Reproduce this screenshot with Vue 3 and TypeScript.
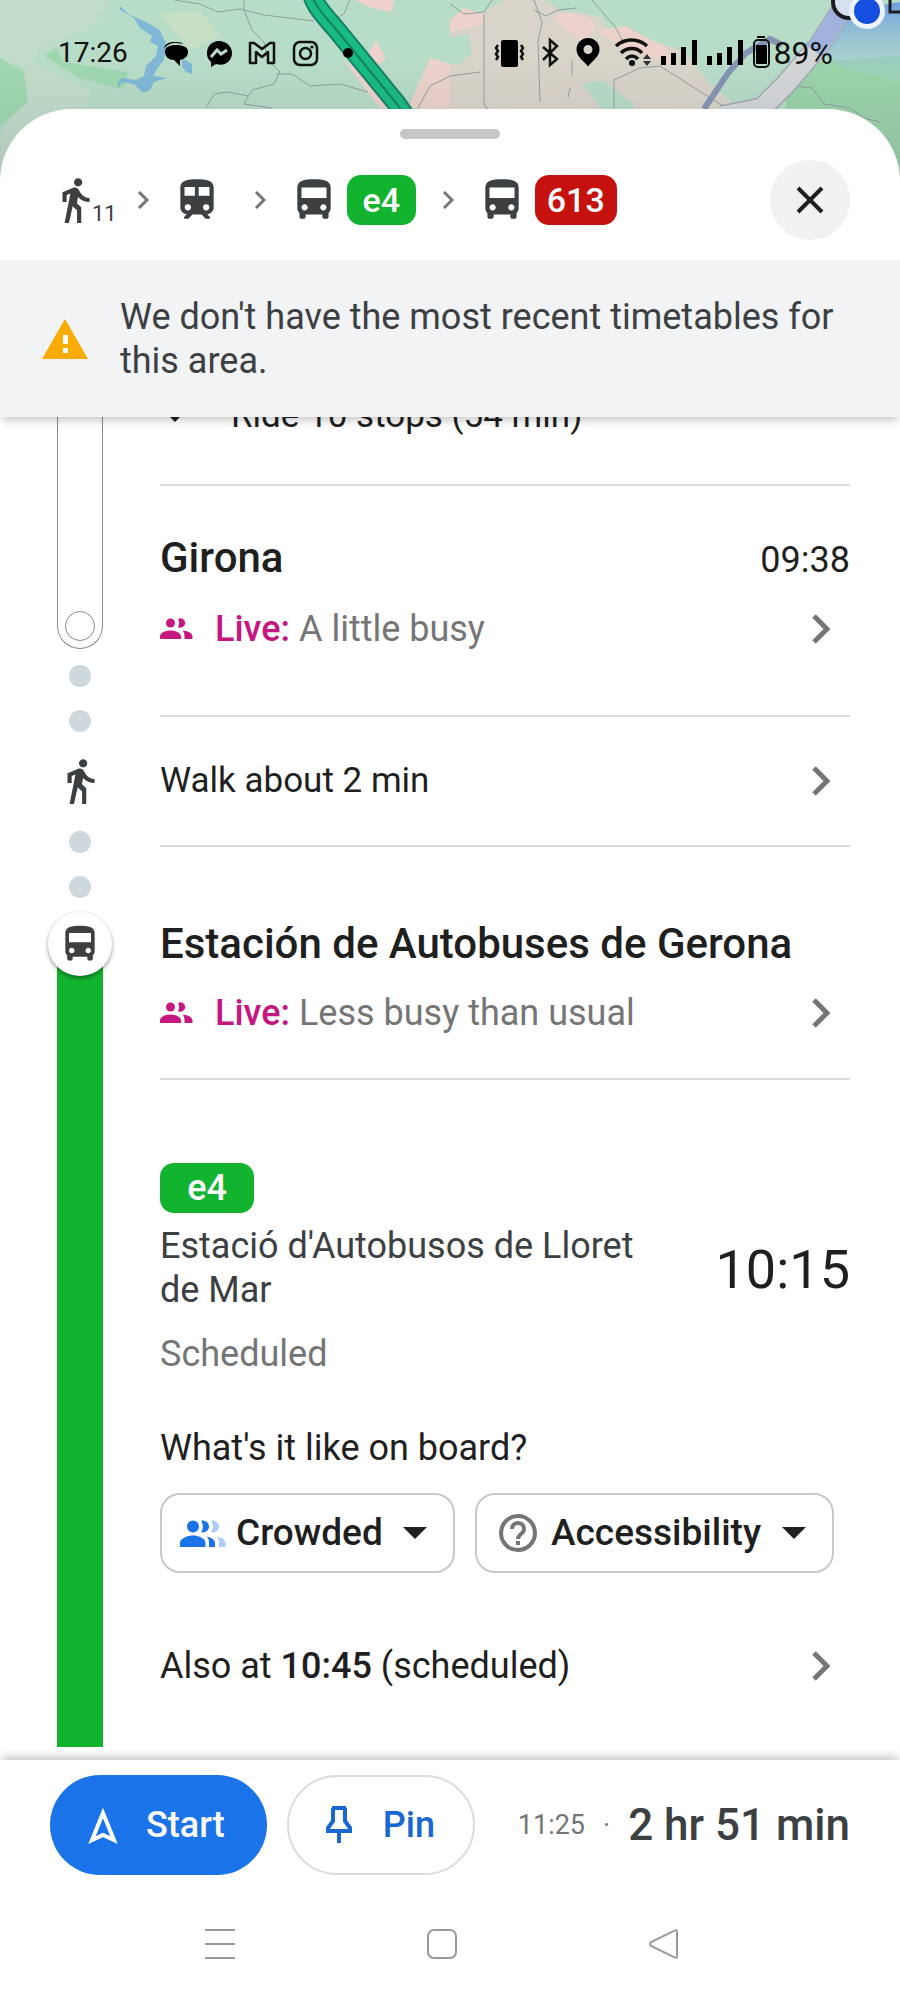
<script setup lang="ts">
interface Leg {
  mode: 'walk' | 'train' | 'bus'
  minutes?: number
  line?: string
  tone?: 'green' | 'red'
}

const legs: Leg[] = [
  { mode: 'walk', minutes: 11 },
  { mode: 'train' },
  { mode: 'bus', line: 'e4', tone: 'green' },
  { mode: 'bus', line: '613', tone: 'red' },
]

const walkPath =
  'M13.5 5.5c1.1 0 2-.9 2-2s-.9-2-2-2-2 .9-2 2 .9 2 2 2zM9.8 8.9L7 23h2.1l1.8-8 2.1 2v6h2v-7.5l-2.1-2 .6-3C14.8 12 16.8 13 19 13v-2c-1.9 0-3.5-1-4.3-2.4l-1-1.6c-.4-.6-1-1-1.7-1-.3 0-.5.1-.8.1L6 8.3V13h2V9.6l1.8-.7z'
const busPath =
  'M4 16c0 .88.39 1.67 1 2.22V20c0 .55.45 1 1 1h1c.55 0 1-.45 1-1v-1h8v1c0 .55.45 1 1 1h1c.55 0 1-.45 1-1v-1.78c.61-.55 1-1.34 1-2.22V6c0-3.500-3.580-4-8-4s-8 .5-8 4v10zm3.500 1c-.83 0-1.500-.67-1.500-1.500S6.670 14 7.500 14s1.500.67 1.500 1.500S8.330 17 7.500 17zm9 0c-.83 0-1.500-.67-1.500-1.500s.67-1.500 1.500-1.500 1.500.67 1.500 1.500-.67 1.500-1.500 1.500zm1.500-6H6V6h12v5z'
const trainPath =
  'M4 6c0-3.5 3.58-4 8-4s8 .5 8 4v9.5c0 1.9-1.4 3.2-3.1 3.3l1.3 1.4v.8h-2.1l-1.9-2H9.8l-1.9 2H5.8v-.8l1.3-1.4C5.4 18.7 4 17.4 4 15.5zM6 5.7v4.200h5V5.700zm6.800 0v4.200H18V5.700zM7.600 14a1.500 1.500 0 1 0 0 3 1.500 1.500 0 0 0 0-3zm8.800 0a1.500 1.500 0 1 0 0 3 1.500 1.500 0 0 0 0-3z'
const modePath = { walk: walkPath, train: trainPath, bus: busPath }
</script>

<template>
  <div class="screen">
    <svg class="map" viewBox="0 0 900 180" preserveAspectRatio="xMidYMin slice" aria-hidden="true">
      <defs>
        <linearGradient id="beam" x1="0" y1="0" x2="0" y2="1">
          <stop offset="0" stop-color="#6f9fe0" />
          <stop offset="1" stop-color="#a9d3cf" stop-opacity=".3" />
        </linearGradient>
        <linearGradient id="shade" x1="0" y1="0" x2="0" y2="1">
          <stop offset="0" stop-color="#556" stop-opacity="0" />
          <stop offset="1" stop-color="#556" stop-opacity=".16" />
        </linearGradient>
      </defs>
      <rect width="900" height="180" fill="#b7dcc7" />
      <path fill="#c2dccb" d="M0 0h110l-20 30-50 18-10 20-30-8zM30 60l60 30-10 40-30 50H0v-40z" />
      <path fill="#9fd8b0" d="M0 58l24 14 4 30-28 24zM44 56l12-8 8 14 64 10-4 18-44-12z" />
      <path fill="#c6dfc5" d="M160 14l40-4 20 26-30 14z" />
      <path fill="#d9d4c9" d="M450 22c8-8 24-10 34-10l20-12h40l16 10 28 4 14 4 12 26 36-4 36 12 22 30 30 26 22 20H414l16-44 20-10z" />
      <path fill="#ecd2cb" d="M354 0h40l-2 12-20-4zM376 40l10 18-8 8-10-12zM342 58l60 50h-22zM430 58l20 6v44h-42zM450 20l14-12 20 6v10l-34 8zM560 14c16-2 36 4 36 14l-14 14-30-24zM596 30l30-4 40 22 6 16-50-16z" />
      <path fill="#b7dcc7" d="M582 84l20-4 32 24v8h-30zM450 38l18-4 4 18-12 12h-10z" />
      <path fill="#9bd3a9" d="M786 96l30-34 84-6v124h-60l-14-62-40-10z" />
      <path fill="url(#beam)" d="M840 12l60-10v80l-60-16-28-20z" />
      <path fill="#7fb8d6" d="M120 6l8 8 18 8 14 8 6 14-2 16-8 10-2 6 12 2-12 4-4 8-4 2h-4l-8-8-12-2-4 6v-6l4-4 14 2 8-4 2-10 10-10 2-10-8-4 2-6-12-8-6-10-14-8zM182 58l10 6v10l-6-2-4-6z" />
      <g fill="none" stroke="#8f9f9d" stroke-width="1">
        <path d="M174 0l26 4 18 8 22-3 24 6 50 6M244 0v10l8 20 12 12 4 18 12 12-6 12-22 6-8 14 28 4M206 108l8-14 14-2 20 4M276 74l16 0 18 12 30-2 28 8M350 0l-6 14-8 4M418 108l12-22 20-10M450 4l14 10 20-2 8-12M484 14v90l4 6M534 0l8 22-4 20 2 60M534 10l12 6 12-6 18-2M592 0l24 28 6 12M450 76l30-4M614 108v-28l26-12 20-2 66 42M572 60v16M570 88l-2 10M784 98l12-12 16 2 12 16 26 4 14 10 16 4" />
      </g>
      <path fill="none" stroke="#8593b4" stroke-width="6" d="M704 109l24-36 18-20 24-14 12 6" />
      <path fill="none" stroke="#a1a7b3" stroke-width="22" d="M722 116l40-8 24-24 34-40 22-34" />
      <path fill="none" stroke="#d3d6d8" stroke-width="19" d="M722 116l40-8 24-24 34-40 22-34" />
      <path fill="none" stroke="#9fb2db" stroke-width="19" d="M814 51l10-14 24-36" />
      <path fill="none" stroke="#157f68" stroke-width="20" d="M311-10c2 14 12 24 24 38l62 76 14 20" />
      <path fill="none" stroke="#18bb82" stroke-width="16" d="M311-10c2 14 12 24 24 38l62 76 14 20" />
      <path fill="none" stroke="#12805d" stroke-width="2" d="M311-10c2 14 12 24 24 38l62 76 14 20" />
      <rect y="60" width="900" height="120" fill="url(#shade)" />
      <circle cx="849" cy="2" r="16" fill="#d6dfee" stroke="#1b1c20" stroke-width="4" />
      <path fill="none" stroke="#1b1c20" stroke-width="3" d="M890-2v14h12" />
      <circle cx="867" cy="11" r="18" fill="#eef3fb" />
      <circle cx="867" cy="11" r="13" fill="#164fe0" />
    </svg>

    <header class="status">
      <span class="clock">17:26</span>
      <svg class="s43" viewBox="-22 -16 43 32"><path d="M-12-4c1-5 4-7 10-7 4 0 7 0 9 2-9-2-15-1-19 5zM12-1c0 5-4 7-8 8v6l-6-6c-5 0-9-3-9-8s4-7 11-7 12 2 12 7z" /></svg>
      <svg class="s43" viewBox="-22 -16 43 32"><path d="M0-12C-7-12-12-7-12 0c0 4 1 6 4 9v5l5-3C6 14 13 8 13 0 13-7 7-12 0-12z" /><path d="M-8 4l6-7 4 4 6-4" fill="none" stroke="#b7dcc7" stroke-width="3" /></svg>
      <svg class="s43" viewBox="-22 -16 43 32"><path d="M-12-10h4l8 6 8-6h4v20H6V-1L0 4l-6-5v11h-6z" fill="none" stroke="#111" stroke-width="2.500" stroke-linejoin="round" /></svg>
      <svg class="s43" viewBox="-22 -16 43 32"><g fill="none" stroke="#111" stroke-width="2.500"><rect x="-11" y="-11" width="23" height="23" rx="6" /><circle cx=".5" cy=".5" r="5.500" /></g><circle cx="7" cy="-6" r="1.600" /></svg>
      <svg class="s43" viewBox="-22 -16 43 32"><circle r="5" /></svg>

      <span class="spacer"></span>
      <svg class="s46" viewBox="-23 -16 46 32"><rect x="-8" y="-13" width="17" height="27" rx="2" /><path d="M-11-8l-2 3 2 3-2 3 2 3-2 3M12-8l2 3-2 3 2 3-2 3 2 3" fill="none" stroke="#111" stroke-width="2.500" /></svg>
      <svg class="s36" viewBox="-18 -16 36 32"><path d="M-7-6L7 6 0 12v-25l7 6L-7 7" fill="none" stroke="#111" stroke-width="2.500" /></svg>
      <svg class="s39" viewBox="-20 -16 39 32"><path fill-rule="evenodd" d="M0-15a11.500 11.500 0 0 0-11.500 11.500C-11.500 4-4 8 0 13.500 4 8 11.500 4 11.500-3.500A11.500 11.500 0 0 0 0-15zm0 7a4.500 4.500 0 1 1 0 9 4.500 4.500 0 0 1 0-9z" /></svg>
      <svg class="s49" viewBox="-25 -16 49 32"><g fill="none" stroke="#111" stroke-width="3.500"><path d="M-16-7c9-8 22-8 31 0M-11 0c6-6 16-6 21 0M-6 6c4-4 8-4 12 0" /></g><circle cy="10" r="3" /><path d="M11 6l4-5 4 5zM11 8l4 5 4-5z" fill="#333" /></svg>
      <svg v-for="n in 2" :key="n" class="s46" viewBox="-23 -16 46 32"><path d="M-18 3h5v9h-5zM-8 0h5v12h-5zM2-6h5v18H2zM13-13h5v25h-5z" /></svg>
      <svg class="s26" viewBox="-13 -17 26 34"><path d="M-4-17h8v2h-8z" /><rect x="-7" y="-13" width="15" height="27" rx="4" fill="none" stroke="#111" stroke-width="2" /><rect x="-5" y="-8" width="11" height="19" rx="1" /></svg>
      <span class="battery">89%</span>
    </header>

    <main class="sheet">
      <div class="handle"></div>
      <div class="summary">
        <ol class="legs">
          <li v-for="(leg, i) in legs" :key="i" :class="['leg', leg.mode]">
            <svg v-if="i > 0" class="sep" viewBox="0 0 12 20"><path d="M2 2l8 8-8 8" /></svg>
            <svg class="mode" viewBox="0 0 24 24"><path :d="modePath[leg.mode]" fill-rule="evenodd" /></svg>
            <sub v-if="leg.minutes">{{ leg.minutes }}</sub>
            <span v-if="leg.line" :class="['line', leg.tone]">{{ leg.line }}</span>
          </li>
        </ol>
        <button class="close" type="button" aria-label="Close">
          <svg viewBox="0 0 28 28"><path d="M2 2l24 24M26 2L2 26" /></svg>
        </button>
      </div>

      <div class="notice" role="status">
        <svg viewBox="0 0 46 40"><path fill="#f9ab00" d="M23 0l23 40H0z" /><path fill="#fff" d="M21 16h5v9h-5zM21 29h5v5h-5z" /></svg>
        <p>We don't have the most recent timetables for this area.</p>
      </div>

      <section class="itinerary">
        <div class="rail" aria-hidden="true">
          <div class="tube"><i></i></div>
          <i class="dot first"></i>
          <i class="dot"></i>
          <svg class="walker" viewBox="0 0 24 24"><path :d="walkPath" /></svg>
          <i class="dot"></i>
          <i class="dot last"></i>
          <div class="stop"><svg viewBox="0 0 24 24"><path :d="busPath" fill-rule="evenodd" /></svg></div>
          <div class="bar"></div>
        </div>

        <div class="steps">
          <button class="ride" type="button">
            <svg class="caret" viewBox="0 0 24 12"><path d="M0 0h24L12 12z" /></svg>
            <span>Ride 10 stops (54 min)</span>
          </button>

          <article class="place girona">
            <div class="title"><h2>Girona</h2><time>09:38</time></div>
            <button class="row" type="button">
              <svg class="people" viewBox="0 0 33 22"><circle cx="10.500" cy="5" r="4.500" /><path d="M18 1.200a4.600 4.600 0 1 1 0 7.700c1.500-2.200 1.500-5.500 0-7.700zM0 21v-2.500c0-4 6-6 10.500-6S21 14.500 21 18.500V21zM22.500 12.600C27 13 32.500 15 32.500 18.500V21h-8v-2.500c0-2.500-.5-4.500-2-5.900z" /></svg>
              <span class="grow"><b>Live:</b> A little busy</span>
              <svg class="chev" viewBox="0 0 18 30"><path d="M2 2l13 13L2 28" /></svg>
            </button>
          </article>

          <button class="row walkrow" type="button">
            <span class="grow">Walk about 2 min</span>
            <svg class="chev" viewBox="0 0 18 30"><path d="M2 2l13 13L2 28" /></svg>
          </button>

          <article class="place estacion">
            <div class="title"><h2>Estación de Autobuses de Gerona</h2></div>
            <button class="row" type="button">
              <svg class="people" viewBox="0 0 33 22"><circle cx="10.500" cy="5" r="4.500" /><path d="M18 1.200a4.600 4.600 0 1 1 0 7.700c1.500-2.200 1.500-5.500 0-7.700zM0 21v-2.500c0-4 6-6 10.500-6S21 14.500 21 18.500V21zM22.500 12.600C27 13 32.500 15 32.500 18.500V21h-8v-2.500c0-2.500-.5-4.500-2-5.900z" /></svg>
              <span class="grow"><b>Live:</b> Less busy than usual</span>
              <svg class="chev" viewBox="0 0 18 30"><path d="M2 2l13 13L2 28" /></svg>
            </button>
          </article>

          <article class="departure">
            <div class="service">
              <div class="towards">
                <span class="line wide green">e4</span>
                <p class="dest">Estació d'Autobusos de Lloret de Mar</p>
                <p class="state">Scheduled</p>
              </div>
              <time>10:15</time>
            </div>
            <h3>What's it like on board?</h3>
            <div class="chips">
              <label class="chip">
                <svg class="crowd" viewBox="0 0 46 27"><g fill="#1a73e8"><circle cx="13" cy="6.500" r="6" /><path d="M21 .6c4-.8 8 2 8 6s-4 6.500-8 5.700c2.500-3.500 2.500-8 0-11.700zM0 27v-4c0-5 8-7.500 13-7.500s12.500 2.500 12.500 7.500v4zM27 16.500c4 1 8 3 8 6.500v4h-6v-4c0-2.500-.5-4.500-2-6.500z" /></g><path fill="#aecbfa" d="M31 .6c4-.6 8 2 8 6s-4 6.500-8 5.700c2.500-3.500 2.500-8 0-11.700zM37 16.500c4 1 8.500 3 8.500 6.500v4H39v-4c0-2.500-.5-4.500-2-6.500z" /></svg>
                <select aria-label="Crowding"><option>Crowded</option></select>
                <svg class="caret" viewBox="0 0 24 12"><path d="M0 0h24L12 12z" /></svg>
              </label>
              <label class="chip">
                <svg class="help" viewBox="0 0 38 38"><circle cx="19" cy="19" r="17" /><path d="M13 15c0-8 12-8 12 0 0 5-6 5-6 10" /><path d="M19 27v4" /></svg>
                <select aria-label="Accessibility"><option>Accessibility</option></select>
                <svg class="caret" viewBox="0 0 24 12"><path d="M0 0h24L12 12z" /></svg>
              </label>
            </div>
            <button class="row also" type="button">
              <span class="grow">Also at <strong>10:45</strong> (scheduled)</span>
              <svg class="chev" viewBox="0 0 18 30"><path d="M2 2l13 13L2 28" /></svg>
            </button>
          </article>
        </div>
      </section>
    </main>

    <footer class="bottom">
      <div class="actions">
        <button class="start" type="button">
          <svg viewBox="0 0 30 38"><path d="M15 7L4 34l11-5 11 5z" /></svg>
          Start
        </button>
        <button class="pin" type="button">
          <svg viewBox="0 0 28 38"><path d="M7 2h14M8 2v13l-5 7v3h22v-3l-5-7V2M14 25v12" /></svg>
          Pin
        </button>
        <p class="total"><small>11:25</small><span class="middot">·</span><strong>2 hr 51 min</strong></p>
      </div>
      <nav class="system">
        <button type="button" aria-label="Recent apps"><svg viewBox="0 0 32 32"><path d="M1 2h30M1 16h30M1 30h30" /></svg></button>
        <button type="button" aria-label="Home"><svg viewBox="0 0 32 32"><rect x="2" y="2" width="28" height="28" rx="6" /></svg></button>
        <button type="button" aria-label="Back"><svg viewBox="0 0 32 32"><path d="M29 4v24q0 3-3 1L3 18q-2-2 0-4L26 3q3-2 3 1z" /></svg></button>
      </nav>
    </footer>
  </div>
</template>

<style>
body {
  margin: 0;
  background: #fff;
}
</style>

<style scoped>
.screen {
  position: relative;
  display: flex;
  flex-direction: column;
  min-height: 100vh;
  font-family: Roboto, 'Liberation Sans', sans-serif;
  font-size: 36px;
  line-height: 44px;
  color: #1f1f1f;
}
button,
select {
  font: inherit;
  color: inherit;
  background: none;
  border: 0;
  padding: 0;
  margin: 0;
  text-align: left;
}
svg {
  display: block;
  flex: none;
}
h2,
h3,
p,
ol {
  margin: 0;
  padding: 0;
}
.map {
  position: absolute;
  top: 0;
  left: 0;
  width: 100%;
  height: 180px;
}
.status {
  position: relative;
  display: flex;
  align-items: center;
  height: 109px;
  padding: 0 67px 4px 58px;
  box-sizing: border-box;
  color: #111;
}
.clock {
  width: 96px;
  font-size: 28px;
}
.battery {
  font-size: 32px;
}
.spacer,
.grow {
  flex: 1;
}
.s43 { width: 43px; }
.s46 { width: 46px; }
.s36 { width: 36px; }
.s39 { width: 39px; }
.s49 { width: 49px; }
.s26 { width: 26px; }
.sheet {
  position: relative;
  flex: 1;
  display: flex;
  flex-direction: column;
  background: #fff;
  border-radius: 72px 72px 0 0;
}
.handle {
  width: 100px;
  height: 10px;
  margin: 20px auto 0;
  border-radius: 5px;
  background: #c6c6c6;
}
.summary {
  display: flex;
  align-items: center;
  justify-content: space-between;
  height: 121px;
  padding: 0 50px;
}
.legs {
  display: flex;
  align-items: center;
  list-style: none;
}
.leg {
  display: flex;
  align-items: center;
}
.mode {
  width: 50px;
  height: 50px;
  fill: #3c4043;
}
.leg sub {
  align-self: flex-end;
  margin-left: -8px;
  font-size: 22px;
  line-height: 22px;
  color: #3c4043;
}
.sep {
  width: 12px;
  height: 20px;
  margin: 0 23px 0 26px;
}
.walk + .leg .sep {
  margin-left: 20px;
}
.train + .leg .sep {
  margin-left: 32px;
}
.sep path,
.chev path {
  fill: none;
  stroke: #757575;
  stroke-width: 3;
}
.line {
  display: flex;
  align-items: center;
  justify-content: center;
  min-width: 69px;
  height: 50px;
  padding: 0 12px;
  margin-left: 8px;
  box-sizing: border-box;
  border-radius: 14px;
  font-size: 34px;
  font-weight: 500;
  color: #fff;
}
.green { background: #12b32f; }
.red { background: #c5120f; }
.close {
  display: flex;
  align-items: center;
  justify-content: center;
  width: 80px;
  height: 80px;
  border-radius: 50%;
  background: #f1f1f1;
}
.close svg {
  width: 28px;
}
.close path {
  fill: none;
  stroke: #1f1f1f;
  stroke-width: 4;
}
.notice {
  position: relative;
  z-index: 1;
  display: flex;
  align-items: center;
  gap: 32px;
  padding: 35px 50px 34px 42px;
  background: #f1f3f4;
  color: #3c4043;
  box-shadow: 0 6px 8px -2px rgba(0, 0, 0, 0.2);
}
.notice svg {
  width: 46px;
}
.itinerary {
  flex: 1;
  display: flex;
  overflow: hidden;
}
.rail {
  display: flex;
  flex-direction: column;
  align-items: center;
  width: 160px;
  padding-bottom: 13px;
  box-sizing: border-box;
}
.tube {
  display: flex;
  align-items: flex-end;
  justify-content: center;
  width: 46px;
  height: 232px;
  padding-bottom: 7px;
  box-sizing: border-box;
  border: 1px solid #8a8a8a;
  border-top: 0;
  border-radius: 0 0 23px 23px;
}
.tube i {
  width: 28px;
  height: 28px;
  border: 1px solid #8a8a8a;
  border-radius: 50%;
}
.dot {
  width: 22px;
  height: 22px;
  margin-top: 23px;
  border-radius: 50%;
  background: #cfd8dc;
}
.dot.first {
  margin-top: 16px;
}
.walker {
  width: 50px;
  height: 50px;
  margin: 24px 0 2px;
  fill: #3c4043;
}
.stop {
  position: relative;
  z-index: 1;
  display: flex;
  align-items: center;
  justify-content: center;
  width: 64px;
  height: 64px;
  margin-top: 14px;
  border-radius: 50%;
  background: #fff;
  box-shadow: 0 2px 4px rgba(0, 0, 0, 0.4);
}
.stop svg {
  width: 44px;
  fill: #3c4043;
}
.bar {
  flex: 1;
  width: 46px;
  margin-top: -32px;
  background: #12b32f;
}
.steps {
  flex: 1;
  display: flex;
  flex-direction: column;
  margin-right: 50px;
}
.ride {
  display: flex;
  align-items: center;
  gap: 44px;
  margin-top: -23px;
  padding: 0 0 46px 3px;
  border-bottom: 2px solid #dadce0;
  font-size: 35px;
}
.caret {
  width: 24px;
  fill: #1f1f1f;
}
.place {
  display: flex;
  flex-direction: column;
  gap: 23px;
  border-bottom: 2px solid #dadce0;
}
.girona {
  padding: 48px 0 64px;
}
.estacion {
  padding: 73px 0 43px;
}
.title {
  display: flex;
  align-items: baseline;
  justify-content: space-between;
  line-height: 48px;
}
h2 {
  font-size: 42px;
  font-weight: 500;
}
.row {
  display: flex;
  align-items: center;
  padding-right: 20px;
}
.place .row {
  color: #757575;
}
.people {
  width: 33px;
  margin-right: 22px;
  fill: #c5177f;
}
.row b {
  font-weight: 500;
  color: #c5177f;
}
.chev {
  width: 18px;
}
.chev path {
  stroke-width: 5;
}
.walkrow {
  min-height: 130px;
  border-bottom: 2px solid #dadce0;
  font-size: 35px;
}
.departure {
  padding: 83px 0 70px;
}
.service {
  display: flex;
  align-items: center;
  justify-content: space-between;
}
.service time {
  font-size: 54px;
  line-height: 64px;
}
.towards {
  width: 500px;
}
.line.wide {
  width: 94px;
  margin: 0 0 11px;
  font-size: 36px;
}
.dest {
  color: #3c4043;
}
.state {
  margin-top: 20px;
  color: #757575;
}
h3 {
  margin: 50px 0 23px;
  font-size: 36px;
  font-weight: 400;
}
.chips {
  display: flex;
  gap: 20px;
}
.chip {
  display: flex;
  align-items: center;
  height: 80px;
  padding: 0 26px 0 18px;
  box-sizing: border-box;
  border: 2px solid #c7c8ca;
  border-radius: 20px;
}
.chip select {
  appearance: none;
  margin: 0 20px 0 10px;
  font-size: 37px;
  font-weight: 500;
  line-height: 44px;
}
.crowd {
  width: 46px;
}
.help {
  width: 38px;
  margin: 0 4px;
  fill: none;
  stroke: #757575;
  stroke-width: 4;
}
.also {
  width: 100%;
  margin-top: 71px;
}
.also strong {
  font-weight: 500;
}
.bottom {
  position: relative;
  background: #fff;
  box-shadow: 0 -6px 8px -2px rgba(0, 0, 0, 0.2);
}
.actions {
  display: flex;
  align-items: center;
  gap: 20px;
  padding: 15px 50px 0;
}
.start,
.pin {
  display: flex;
  align-items: center;
  height: 100px;
  box-sizing: border-box;
  border-radius: 50px;
  font-weight: 500;
}
.start {
  gap: 28px;
  padding: 0 42px 0 38px;
  background: #1a73e8;
  color: #fff;
}
.start svg {
  width: 30px;
  fill: none;
  stroke: #fff;
  stroke-width: 4;
}
.pin {
  gap: 30px;
  padding: 0 38px 0 36px;
  border: 2px solid #dadce0;
  color: #1967d2;
}
.pin svg {
  width: 28px;
  fill: none;
  stroke: #1967d2;
  stroke-width: 4;
}
.total {
  flex: 1;
  display: flex;
  align-items: center;
  justify-content: flex-end;
  white-space: nowrap;
  color: #3c4043;
}
.total small,
.middot {
  font-size: 27px;
  color: #757575;
}
.middot {
  margin: 0 18px;
}
.total strong {
  font-size: 44px;
  font-weight: 500;
}
.system {
  display: flex;
  justify-content: center;
  gap: 190px;
  padding: 53px 0 40px;
  margin-right: 16px;
}
.system svg {
  width: 32px;
  fill: none;
  stroke: #9a9a9a;
  stroke-width: 2;
}
</style>
